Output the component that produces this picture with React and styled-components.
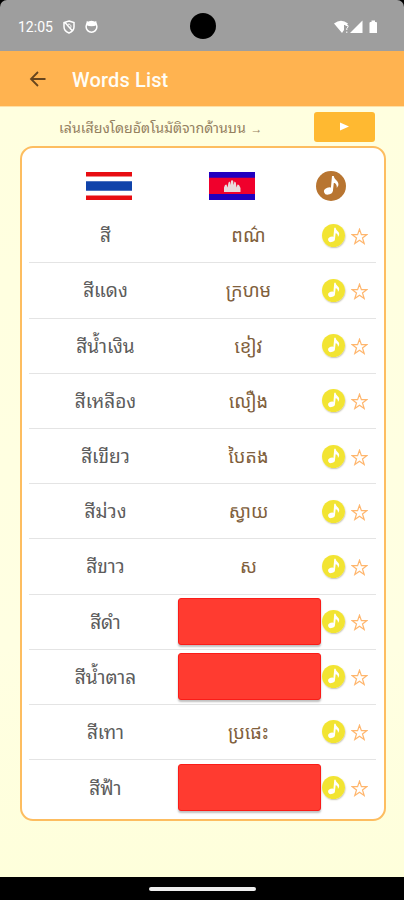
import styled, { createGlobalStyle } from 'styled-components';
import { useState } from 'react';

const GlobalStyle = createGlobalStyle`
    * {
        box-sizing: border-box;
    }
    body {
        margin: 0;
        background: #000;
    }
`;

const Screen = styled.div`
    width: 404px;
    height: 900px;
    display: flex;
    flex-direction: column;
    overflow: hidden;
    background: #000;
    font-family: Roboto, 'Noto Sans Thai Looped', 'Noto Looped Thai', Waree, Loma, Garuda, 'Noto Sans Khmer', sans-serif;
`;

const StatusBar = styled.div`
    position: relative;
    flex: none;
    height: 51px;
    padding: 2px 26px 0 18px;
    display: flex;
    align-items: center;
    justify-content: space-between;
    background: #9e9e9e;
    border-radius: 7px 7px 0 0;
    color: #fff;
`;
const StatusGroup = styled.div`
    display: flex;
    align-items: center;
    gap: ${(props) => props.$gap || 0}px;
`;
const Time = styled.span`
    width: 36px;
    margin-right: -1px;
    font-size: 14px;
    white-space: nowrap;
`;
const Camera = styled.div`
    position: absolute;
    left: 190px;
    top: 13px;
    width: 26px;
    height: 26px;
    border-radius: 50%;
    background: #000;
`;

const AppBar = styled.header`
    flex: none;
    height: 55px;
    padding: 2px 0 0 28px;
    display: flex;
    align-items: center;
    gap: 24px;
    background: #ffb350;
`;
const BackBtn = styled.button`
    width: 20px;
    height: 20px;
    margin-top: -2px;
    padding: 0;
    border: 0;
    background: none;
    display: flex;
`;
const Title = styled.h1`
    margin: 0;
    font-size: 20px;
    font-weight: 500;
    letter-spacing: 0.15px;
    color: #fffdf5;
`;

const Body = styled.main`
    flex: none;
    height: 771px;
    background: linear-gradient(#ffffdf, #ffffe2 70%, #feffdb);
`;
const Hint = styled.div`
    height: 40px;
    padding: 0 29px 0 59px;
    display: flex;
    align-items: center;
    justify-content: space-between;
    border-top: 1px solid #ffe0a5;
`;
const HintText = styled.span`
    font-size: 14.2px;
    color: #94805f;
    white-space: nowrap;
`;
const Arrow = styled.span`
    margin-left: 1px;
    font-size: 12px;
`;
const PlayBtn = styled.button`
    width: 61px;
    height: 30px;
    padding: 0;
    border: 0;
    border-radius: 3px;
    background: #ffb931;
    display: flex;
    align-items: center;
    justify-content: center;
`;

const Card = styled.section`
    width: 366px;
    height: 675px;
    margin-left: 20px;
    padding: 0 8px 0 7px;
    border: 2px solid #fdbd60;
    border-radius: 13px;
    background: #fff;
`;
const CardHead = styled.div`
    height: 60.2px;
    padding: 16px 0 0 57px;
    display: flex;
    align-items: flex-start;
`;
const Flag = styled.svg`
    flex: none;
    width: 46px;
    height: 28px;
    margin: 8px 77px 0 0;
    display: block;

    & + & {
        margin-right: 61px;
    }
`;
const HeadNote = styled.div`
    margin-top: 7px;
    height: 30px;
`;

const Row = styled.div`
    height: 55.2px;
    display: grid;
    grid-template-columns: 149px 143px 55px;
    align-items: center;
    border-bottom: 1.3px solid #e4e4e4;

    &:last-child {
        border-bottom: 0;
    }
`;
const Word = styled.span`
    padding-left: ${(props) => (props.$khmer ? 0 : 4)}px;
    padding-right: ${(props) => (props.$khmer ? 2 : 0)}px;
    padding-top: 2px;
    text-align: center;
    font-size: ${(props) => (props.$khmer ? 18.3 : 19)}px;
    line-height: 24px;
    white-space: nowrap;
    color: ${(props) => (props.$khmer ? '#80603c' : '#5c5c5c')};
`;
const Cover = styled.button`
    width: 143px;
    height: 47px;
    padding: 0;
    border: 1px solid #fa1c18;
    border-radius: 3px;
    background: #ff3b30;
    box-shadow: 0 2px 2px rgba(0, 0, 0, 0.25);
`;
const Actions = styled.div`
    padding-left: 1px;
    display: flex;
    align-items: center;
    gap: 6px;
`;
const IconBtn = styled.button`
    padding: 0;
    margin-top: ${(props) => props.$drop || 0}px;
    border: 0;
    border-radius: 50%;
    background: none;
    box-shadow: ${(props) => (props.$raised ? '0.5px 1px 1.5px rgba(120, 110, 60, 0.4)' : 'none')};
    display: flex;
`;

const NavBar = styled.div`
    flex: 1;
    display: flex;
    align-items: center;
    justify-content: center;
`;
const Handle = styled.div`
    width: 107px;
    height: 4px;
    border-radius: 2px;
    background: #eee;
`;

const words = [
    ['สี', 'ពណ៌'],
    ['สีแดง', 'ក្រហម'],
    ['สีน้ำเงิน', 'ខៀវ'],
    ['สีเหลือง', 'លឿង'],
    ['สีเขียว', 'បៃតង'],
    ['สีม่วง', 'ស្វាយ'],
    ['สีขาว', 'ស'],
    ['สีดำ', 'ខ្មៅ'],
    ['สีน้ำตาล', 'ត្នោត'],
    ['สีเทา', 'ប្រផេះ'],
    ['สีฟ้า', 'ផ្ទៃមេឃ'],
];

function Note({ size, color }) {
    return (
        <svg width={size} height={size} viewBox="0 0 30 30">
            <circle cx="15" cy="15" r="15" fill={color} />
            <ellipse cx="12.4" cy="20" rx="4.5" ry="3.5" fill="#fff" transform="rotate(-20 12.4 20)" />
            <path d="M14.6 20L16 5H17.8C18 9 23.5 10 22.3 14.5L20.8 17C21 13.5 19.5 12.2 17.8 12L16.9 20Z" fill="#fff" />
        </svg>
    );
}

function Star({ on }) {
    return (
        <svg width="17" height="17" viewBox="0 0 17 17">
            <path
                d="M8.5 1.2L10.4 6.6H16L11.5 9.9L13.2 15.5L8.5 12.2L3.8 15.5L5.5 9.9L1 6.6H6.6Z"
                fill={on ? '#ffb350' : 'none'}
                stroke="#ffb66d"
                strokeWidth="1.2"
            />
        </svg>
    );
}

export default function App() {
    const [hidden, setHidden] = useState([7, 8, 10]);
    const [stars, setStars] = useState([]);

    const toggleStar = (i) => {
        setStars(stars.includes(i) ? stars.filter((s) => s !== i) : [...stars, i]);
    };

    return (
        <Screen>
            <GlobalStyle />
            <StatusBar>
                <StatusGroup $gap={10}>
                    <Time>12:05</Time>
                    <svg width="12" height="14" viewBox="0 0 12 14" fill="none" stroke="#fff" strokeWidth="1.5">
                        <path d="M6 1L11 2.5V7C11 10 8.5 12 6 13C3.5 12 1 10 1 7V2.5ZM2 2.5L9.5 11" />
                        <path d="M5 4.2C8 3.8 8.5 6.5 7.5 8" strokeWidth="1" />
                    </svg>
                    <svg width="13" height="13" viewBox="0 0 13 13">
                        <circle cx="6.5" cy="6.8" r="5.4" fill="none" stroke="#fff" strokeWidth="1.5" />
                        <path d="M1 5L1.8 1L4 2Q6.5 .8 9 2L11.2 1L12 5Q6.5 7.5 1 5Z" fill="#fff" />
                    </svg>
                </StatusGroup>
                <Camera />
                <StatusGroup>
                    <svg width="44" height="14" viewBox="0 0 44 14" fill="#fff">
                        <path d="M0 3.5Q7 -1.8 14 3.5L13 5H10V10L8 13Z" />
                        <path d="M11.5 5.5H14V7L12.8 8.5V10M12.8 11.5V13" fill="none" stroke="#fff" strokeWidth="1" />
                        <path d="M28.5 .5V13H16Z" />
                        <path d="M35.5 13V3Q35.5 2 36.5 2H37.5V.5H41V2H42Q43 2 43 3V13Z" />
                    </svg>
                </StatusGroup>
            </StatusBar>
            <AppBar>
                <BackBtn aria-label="Back">
                    <svg width="20" height="20" viewBox="0 0 20 20" fill="none" stroke="#67451d" strokeWidth="1.8">
                        <path d="M17.5 10H3.2M10 3L3 10L10 17" />
                    </svg>
                </BackBtn>
                <Title>Words List</Title>
            </AppBar>
            <Body>
                <Hint>
                    <HintText>
                        เล่นเสียงโดยอัตโนมัติจากด้านบน <Arrow>→</Arrow>
                    </HintText>
                    <PlayBtn aria-label="Play" onClick={() => setHidden([])}>
                        <svg width="9" height="9" viewBox="0 0 9 9" fill="#fff">
                            <path d="M0 .5L9 4.5L0 8.5Z" />
                        </svg>
                    </PlayBtn>
                </Hint>
                <Card>
                    <CardHead>
                        <Flag viewBox="0 0 46 28">
                            <path d="M0 0H46V4.5H0ZM0 23.5H46V28H0Z" fill="#e80d12" />
                            <path d="M0 9.3H46V18.7H0Z" fill="#1043aa" />
                        </Flag>
                        <Flag viewBox="0 0 46 28">
                            <path d="M0 0H46V28H0Z" fill="#2100c0" />
                            <path d="M0 5.8H46V22H0Z" fill="#f0002c" />
                            <path
                                d="M15 20V15.5L16 13L17.5 12.5L18.5 15.5L19.5 10.5L21 9.5L21.8 13L22 9L23 8L24.2 9L24.5 13L25.5 9.5L26.8 10.5L27.5 15.5L28.5 12.5L30 13L31.5 16V20Z"
                                fill="#ead9dc"
                            />
                        </Flag>
                        <HeadNote>
                            <Note size={30} color="#b87531" />
                        </HeadNote>
                    </CardHead>
                    {words.map(([thai, khmer], i) => (
                        <Row key={thai}>
                            <Word>{thai}</Word>
                            {hidden.includes(i) ? (
                                <Cover
                                    aria-label="Show word"
                                    onClick={() => setHidden(hidden.filter((h) => h !== i))}
                                />
                            ) : (
                                <Word $khmer>{khmer}</Word>
                            )}
                            <Actions>
                                <IconBtn aria-label="Listen" $raised>
                                    <Note size={23} color="#f2e432" />
                                </IconBtn>
                                <IconBtn aria-label="Star" $drop={2} onClick={() => toggleStar(i)}>
                                    <Star on={stars.includes(i)} />
                                </IconBtn>
                            </Actions>
                        </Row>
                    ))}
                </Card>
            </Body>
            <NavBar>
                <Handle />
            </NavBar>
        </Screen>
    );
}
